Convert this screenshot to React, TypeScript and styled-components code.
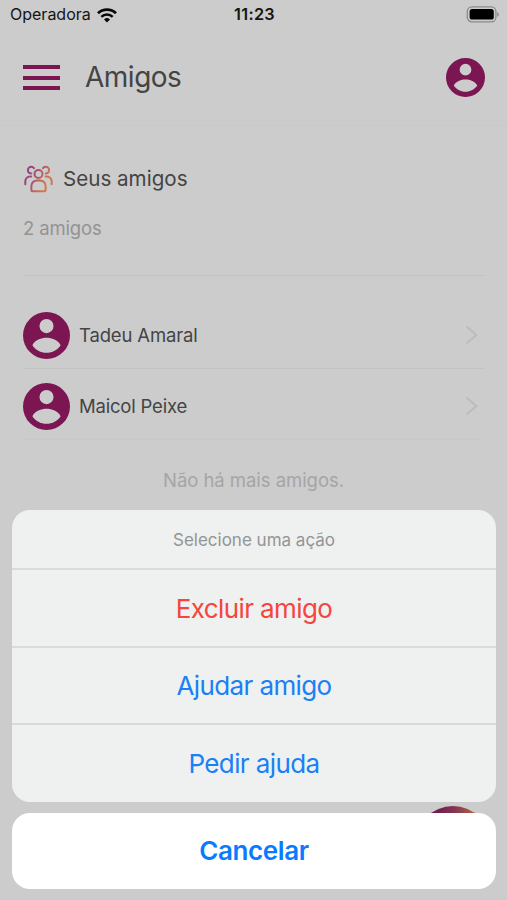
import React from 'react';
import styled, { createGlobalStyle } from 'styled-components';

const Global = createGlobalStyle`
  * { box-sizing: border-box; }
  body { margin: 0; background: #cccccc; font-family: Inter, Roboto, sans-serif; }
  button { font: inherit; border: 0; padding: 0; background: none; }
  svg { display: block; flex: none; }
`;

const Screen = styled.div`
  position: relative;
  width: 507px;
  height: 900px;
  overflow: hidden;
  background: #cccccc;
  color: #444444;
`;

const StatusBar = styled.header`
  display: grid;
  grid-template-columns: 1fr auto 1fr;
  align-items: center;
  height: 30px;
  padding: 0 8px 0 10px;
  color: #151515;
`;

const Carrier = styled.div`
  display: flex;
  align-items: center;
  gap: 6px;
`;

const BatterySlot = styled.div`
  justify-self: end;
  margin-top: -2px;
`;

const Label = styled.span<{ $size: number; $track?: number; $weight?: number; $color?: string }>`
  font-size: ${(p) => p.$size}px;
  letter-spacing: ${(p) => p.$track ?? 0}px;
  font-weight: ${(p) => p.$weight ?? 400};
  color: ${(p) => p.$color ?? 'inherit'};
  line-height: 1.2;
  white-space: nowrap;
`;

const NavBar = styled.nav`
  display: flex;
  align-items: center;
  height: 96px;
  padding: 0 22px 0 23px;
  border-bottom: 1px solid #cac9c9;
`;

const MenuButton = styled.button`
  display: flex;
  flex-direction: column;
  justify-content: space-between;
  width: 37px;
  height: 25px;
  margin-right: 25px;
`;

const MenuLine = styled.span`
  height: 4px;
  background: #7c1653;
`;

const ProfileButton = styled.button`
  margin-left: auto;
`;

const Content = styled.main`
  padding: 0 23px;
`;

const Summary = styled.section`
  height: 150px;
  padding-top: 38px;
  border-bottom: 1px solid #c2c2c2;
`;

const SummaryTitle = styled.div`
  display: flex;
  align-items: center;
  gap: 10px;
  height: 30px;
  margin-bottom: 23px;
`;

const FriendList = styled.ul`
  list-style: none;
  margin: 0;
  padding: 26px 0 0;
`;

const FriendRow = styled.li<{ $height: number; $top: number; $line: string }>`
  display: flex;
  align-items: center;
  gap: 9px;
  height: ${(p) => p.$height}px;
  padding: ${(p) => p.$top}px 5px 0 0;
  border-bottom: 1px solid ${(p) => p.$line};
`;

const ChevronSlot = styled.span`
  margin-left: auto;
`;

const EmptyNote = styled.p`
  margin: 29px 0 0;
  text-align: center;
  line-height: 1;
`;

const Fab = styled.div`
  position: absolute;
  right: 16px;
  bottom: 18px;
  width: 76px;
  height: 76px;
  border-radius: 50%;
  background: linear-gradient(95deg, #6a1650 20%, #86384f 50%, #b8693d 76%);
`;

const Sheet = styled.div`
  position: absolute;
  left: 12px;
  right: 11px;
  bottom: 11px;
  display: flex;
  flex-direction: column;
  gap: 11px;
`;

const SheetGroup = styled.div`
  height: 291.5px;
  border-radius: 18px;
  background: #eff0f0;
  overflow: hidden;
`;

const SheetTitle = styled.div`
  display: flex;
  align-items: center;
  justify-content: center;
  height: 58px;
  padding-top: 2px;
`;

const SheetAction = styled.button`
  display: flex;
  align-items: center;
  justify-content: center;
  width: 100%;
  height: 77.5px;
  padding-top: 1px;
  border-top: 2px solid #d9dbdb;
`;

const CancelButton = styled.button`
  display: flex;
  align-items: center;
  justify-content: center;
  height: 76.5px;
  border-radius: 18px;
  background: #ffffff;
`;

function AccountIcon({ size }: { size: number }) {
  return (
    <svg width={size} height={size} viewBox="2 2 20 20">
      <path
        fill="#7c1653"
        fillRule="evenodd"
        d="M12 2a10 10 0 1 0 0 20a10 10 0 0 0 0-20zM12 5a3 3 0 1 1 0 6a3 3 0 0 1 0-6zM6 16.1C7.1 14 9.8 13 12 13S16.9 14 18 16.1C16.7 18.1 14.5 19.3 12 19.3S7.3 18.1 6 16.1z"
      />
    </svg>
  );
}

function WifiIcon() {
  return (
    <svg width="20" height="15" viewBox="0 0 20 15" fill="none" stroke="#080808">
      <path d="M1 5.3a12.8 12.8 0 0 1 18 0" strokeWidth="2.7" />
      <path d="M4.3 8.8a8.2 8.2 0 0 1 11.4 0" strokeWidth="2.5" />
      <path d="M10 14.6 7 11.5a4.3 4.3 0 0 1 6 0z" fill="#080808" stroke="none" />
    </svg>
  );
}

function BatteryIcon() {
  return (
    <svg width="33" height="17" viewBox="0 0 33 17">
      <rect x="1.3" y="0.8" width="28.6" height="15" rx="4.6" fill="none" stroke="#8b8b8b" strokeWidth="1.3" />
      <rect x="3.6" y="3" width="24.2" height="10.6" rx="2.6" fill="#000" />
      <path d="M31.2 6v4.8c1-.4 1.6-1.3 1.6-2.4s-.6-2-1.6-2.4z" fill="#8b8b8b" />
    </svg>
  );
}

function GroupIcon() {
  return (
    <svg width="30" height="28" viewBox="0 0 30 28" fill="none" stroke="url(#group)" strokeWidth="2" strokeLinecap="round" strokeLinejoin="round">
      <defs>
        <linearGradient id="group" gradientUnits="userSpaceOnUse" x1="2" y1="6" x2="28" y2="20">
          <stop offset="0.1" stopColor="#914080" />
          <stop offset="0.5" stopColor="#b45b68" />
          <stop offset="0.8" stopColor="#cf7848" />
        </linearGradient>
      </defs>
      <circle cx="15.5" cy="9" r="4" />
      <path d="M9.4 26.3q-1 0-1-1.2V21a5.6 5.6 0 0 1 5.6-5.6h3a5.6 5.6 0 0 1 5.6 5.6v4.1q0 1.2-1.2 1.2z" />
      <path d="M11 3.2a3.4 3.4 0 1 0-2.8 5.4" />
      <path d="M20 3.2a3.4 3.4 0 1 1 2.8 5.4" />
      <path d="M2.3 19.2v-2.8a4.8 4.8 0 0 1 4.8-4.8h1.1" />
      <path d="M28.7 19.2v-2.8a4.8 4.8 0 0 0-4.8-4.8h-1.1" />
    </svg>
  );
}

function Chevron() {
  return (
    <svg width="16" height="20" viewBox="0 0 16 20" fill="none" stroke="#bcbcbc" strokeWidth="2">
      <path d="M3.5 1.5 13.3 10 3.5 18.5" />
    </svg>
  );
}

const friends = [
  { name: 'Tadeu Amaral', height: 67, top: 0, line: '#c3c3c3', track: -0.15 },
  { name: 'Maicol Peixe', height: 71, top: 4, line: '#c9c9c9', track: -0.2 },
];

const actions = [
  { text: 'Excluir amigo', color: '#f4463c' },
  { text: 'Ajudar amigo', color: '#1a80f5' },
  { text: 'Pedir ajuda', color: '#1a80f5' },
];

export default function App() {
  return (
    <Screen>
      <Global />
      <StatusBar>
        <Carrier>
          <Label $size={16}>Operadora</Label>
          <WifiIcon />
        </Carrier>
        <Label $size={16.3} $weight={600} $track={0.3}>11:23</Label>
        <BatterySlot>
          <BatteryIcon />
        </BatterySlot>
      </StatusBar>
      <NavBar>
        <MenuButton aria-label="Menu">
          <MenuLine />
          <MenuLine />
          <MenuLine />
        </MenuButton>
        <Label $size={28} $track={-0.5}>Amigos</Label>
        <ProfileButton aria-label="Perfil">
          <AccountIcon size={39} />
        </ProfileButton>
      </NavBar>
      <Content>
        <Summary>
          <SummaryTitle>
            <GroupIcon />
            <Label $size={20.6}>Seus amigos</Label>
          </SummaryTitle>
          <Label $size={18.5} $track={-0.15} $color="#939393">2 amigos</Label>
        </Summary>
        <FriendList>
          {friends.map((f) => (
            <FriendRow key={f.name} $height={f.height} $top={f.top} $line={f.line}>
              <AccountIcon size={47} />
              <Label $size={18.5} $track={f.track}>{f.name}</Label>
              <ChevronSlot>
                <Chevron />
              </ChevronSlot>
            </FriendRow>
          ))}
        </FriendList>
        <EmptyNote>
          <Label $size={18.5} $track={-0.05} $color="#a5a5a5">Não há mais amigos.</Label>
        </EmptyNote>
      </Content>
      <Fab />
      <Sheet>
        <SheetGroup>
          <SheetTitle>
            <Label $size={17} $color="#929595">Selecione uma ação</Label>
          </SheetTitle>
          {actions.map((a) => (
            <SheetAction key={a.text}>
              <Label $size={26} $track={-0.6} $color={a.color}>{a.text}</Label>
            </SheetAction>
          ))}
        </SheetGroup>
        <CancelButton>
          <Label $size={26} $track={-0.4} $weight={600} $color="#0a7aff">Cancelar</Label>
        </CancelButton>
      </Sheet>
    </Screen>
  );
}
